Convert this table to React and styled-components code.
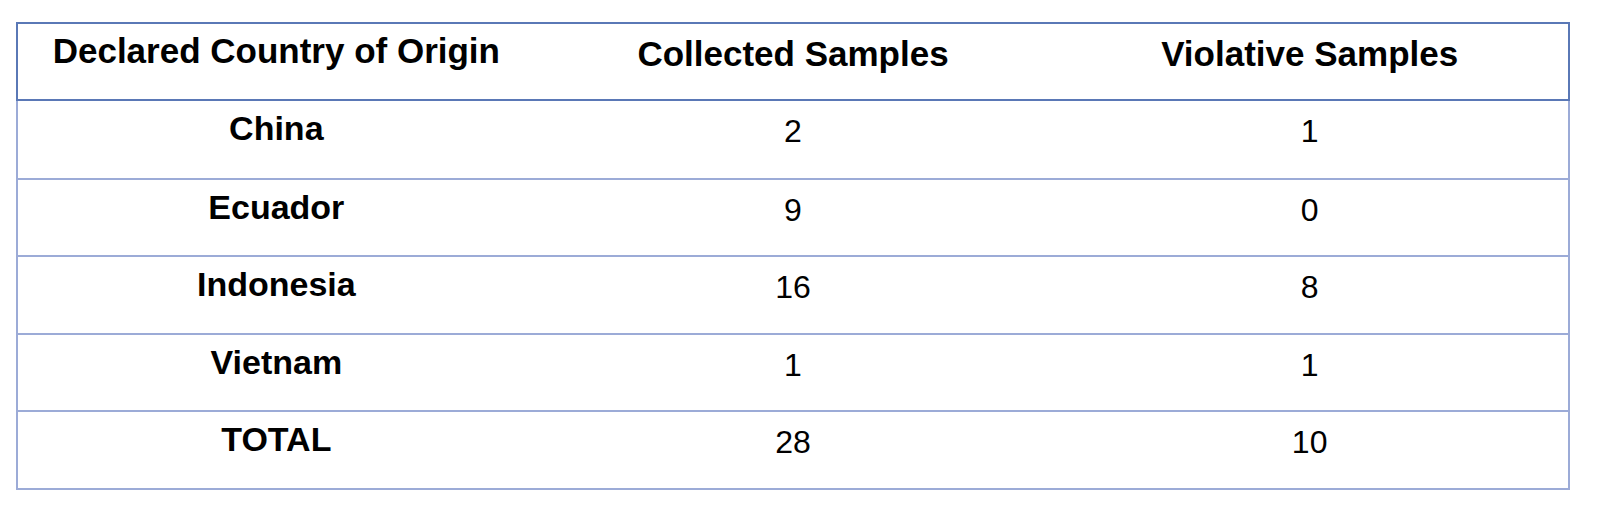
import styled, { createGlobalStyle } from 'styled-components';

const GlobalStyle = createGlobalStyle`
  html, body {
    margin: 0;
    background: #ffffff;
  }
  body {
    font-family: "Liberation Sans", Arial, sans-serif;
    color: #000000;
  }
`;

const Page = styled.div`
  width: 1600px;
  height: 519px;
  padding: 22px 0 0 16px;
  box-sizing: border-box;
`;

const Table = styled.div`
  width: 1554px;
  display: flex;
  flex-direction: column;
`;

const HeaderRow = styled.div`
  display: grid;
  grid-template-columns: repeat(3, 1fr);
  height: 79px;
  box-sizing: border-box;
  border: 2px solid #5a78b6;
`;

const HeaderCell = styled.div`
  text-align: center;
  font-size: 35px;
  font-weight: 700;
  line-height: 40px;
  padding-top: ${({ $lift }) => ($lift ? '7px' : '10px')};
  white-space: nowrap;
`;

const Body = styled.div`
  border: 2px solid #9cabd7;
  border-top: none;
  display: flex;
  flex-direction: column;
`;

const Row = styled.div`
  display: grid;
  grid-template-columns: repeat(3, 1fr);
  height: ${({ $h }) => $h}px;
  box-sizing: border-box;
  border-bottom: ${({ $last }) => ($last ? 'none' : '2px solid #9cabd7')};
`;

const Country = styled.div`
  text-align: center;
  font-size: 34px;
  font-weight: 700;
  line-height: 40px;
  padding-top: 7px;
`;

const Count = styled.div`
  text-align: center;
  font-size: 32px;
  font-weight: 400;
  line-height: 40px;
  padding-top: 10px;
`;

const rows = [
  { country: 'China', collected: 2, violative: 1, h: 79 },
  { country: 'Ecuador', collected: 9, violative: 0, h: 77 },
  { country: 'Indonesia', collected: 16, violative: 8, h: 78 },
  { country: 'Vietnam', collected: 1, violative: 1, h: 77 },
  { country: 'TOTAL', collected: 28, violative: 10, h: 76 },
];

export default function App() {
  return (
    <Page>
      <GlobalStyle />
      <Table>
        <HeaderRow>
          <HeaderCell $lift>Declared Country of Origin</HeaderCell>
          <HeaderCell>Collected Samples</HeaderCell>
          <HeaderCell>Violative Samples</HeaderCell>
        </HeaderRow>
        <Body>
          {rows.map((r, i) => (
            <Row key={r.country} $h={r.h} $last={i === rows.length - 1}>
              <Country>{r.country}</Country>
              <Count>{r.collected}</Count>
              <Count>{r.violative}</Count>
            </Row>
          ))}
        </Body>
      </Table>
    </Page>
  );
}
